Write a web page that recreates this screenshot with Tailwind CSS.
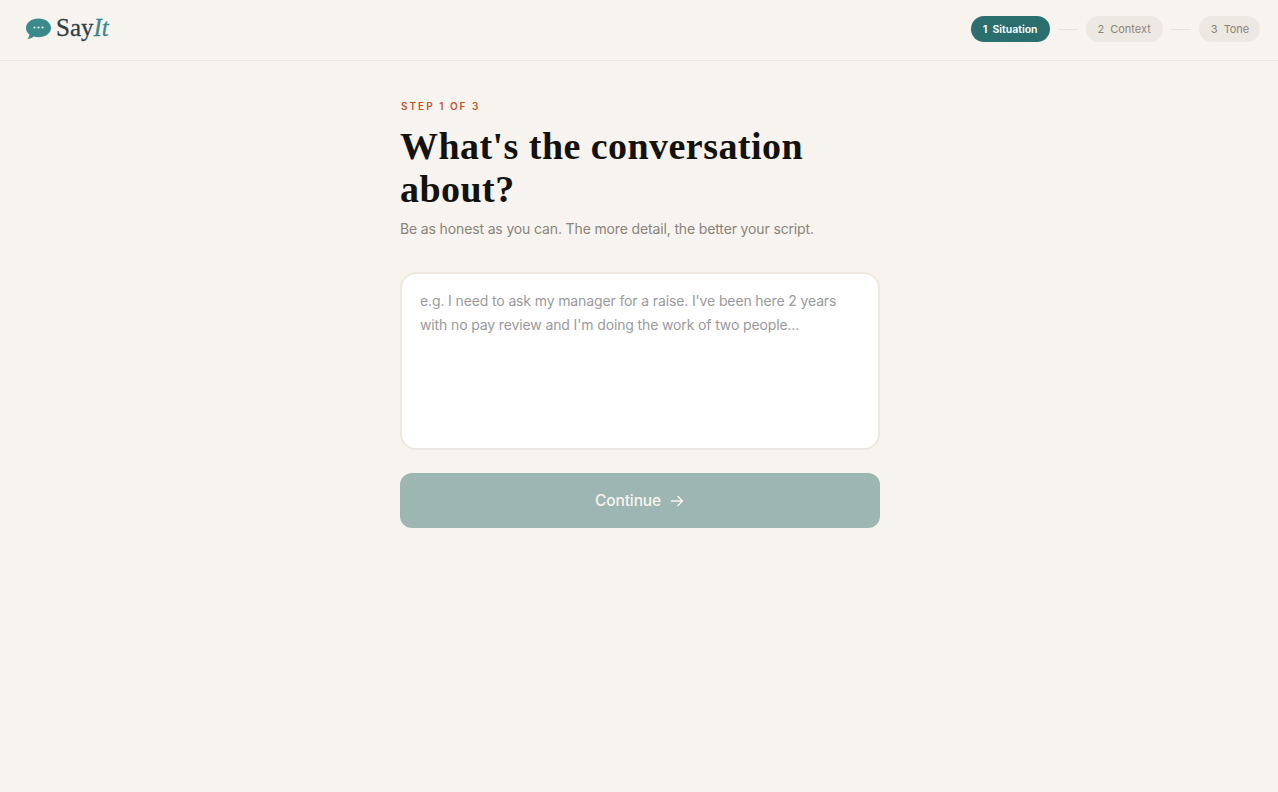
<!DOCTYPE html>
<html lang="en">

<head>
    <meta charset="UTF-8">
    <meta name="viewport" content="width=device-width, initial-scale=1.0">
    <title>SayIt</title>
    <script src="https://cdn.jsdelivr.net/npm/@tailwindcss/browser@4"></script>
</head>

<body class="min-h-screen bg-[#f7f4ef] font-['Inter',sans-serif] text-[#111111]">
    <!-- Top bar -->
    <header class="flex h-[61px] items-center justify-between border-b border-[#ece8e1] pb-[2px] pl-[25px] pr-[18px]">
        <div class="flex items-center gap-[4px]">
            <svg class="w-[27px] h-[24px]" viewBox="0 0 27 24">
                <path d="M13.5 1.5C6.6 1.5 1 5.4 1 11c0 2.7 1.3 5 3.4 6.6-.1 1.7-.8 3.2-2 4.6 2.4-.2 4.7-1.1 6.3-2.6 1.5.4 3.1.6 4.800.6 6.900 0 12.500-3.900 12.500-9.200S20.400 1.500 13.500 1.500z" fill="#3a8a8c" />
                <circle cx="9.500" cy="10.500" r="1.100" fill="#e3efee" />
                <circle cx="13.500" cy="10.500" r="1.100" fill="#e3efee" />
                <circle cx="17.500" cy="10.500" r="1.100" fill="#e3efee" />
            </svg>
            <span class="mb-[3px] font-['Liberation_Serif',serif] text-[25px] leading-none text-[#2f3f48] [-webkit-text-stroke:0.3px]">Say<em class="text-[#3a8a8c]">It</em></span>
        </div>

        <nav class="flex items-center gap-[8px] text-[11px]">
            <span class="flex h-[26px] items-center gap-[5px] rounded-full bg-[#2a6f6d] px-[12px] font-semibold text-white">1 <span class="pt-[1px] text-[10.500px]">Situation</span></span>
            <span class="h-px w-[20px] bg-[#e8e3dc]"></span>
            <span class="flex h-[26px] items-center gap-[6px] rounded-full bg-[#ede8e2] px-[12px] text-[#8c8479]">2 <span>Context</span></span>
            <span class="h-px w-[20px] bg-[#e8e3dc]"></span>
            <span class="flex h-[26px] items-center gap-[6px] rounded-full bg-[#ede8e2] pl-[12px] pr-[11px] text-[#8c8479]">3 <span class="tracking-[-0.1px]">Tone</span></span>
        </nav>
    </header>

    <!-- Step form -->
    <main class="flex justify-center pl-[2px]">
        <div class="w-[480px] pt-[38px]">
            <p class="pl-[1px] text-[10px] font-semibold leading-[14px] tracking-[2px] text-[#c4532d]">STEP 1 OF 3</p>
            <h1 class="mt-[12px] w-[420px] font-['Liberation_Serif',serif] text-[38px] font-bold leading-[43px] tracking-[0.45px] text-[#14120f]">What's the conversation about?</h1>
            <p class="mt-[8px] text-[14px] leading-[20px] tracking-[-0.14px] text-[#8a8379]">Be as honest as you can. The more detail, the better your script.</p>

            <textarea rows="5" class="mt-[33px] block h-[178px] w-full resize-none rounded-[16px] border-2 border-[#ece8e1] bg-white px-[18px] py-[15px] text-[14px] leading-[24px] tracking-[-0.13px] placeholder:text-[#9a9a9c]" placeholder="e.g. I need to ask my manager for a raise. I've been here 2 years with no pay review and I'm doing the work of two people..."></textarea>

            <button class="mt-[23px] flex h-[55px] w-full items-center justify-center gap-[8px] rounded-[12px] bg-[#9db6b2] text-[15.500px] font-medium tracking-[-0.1px] text-[#f7f4ef]">
                Continue
                <svg class="w-[16px] h-[16px]" viewBox="0 0 16 16" fill="none" stroke="currentColor" stroke-width="1.500" stroke-linecap="round" stroke-linejoin="round">
                    <path d="M2.500 8h11M9 3.500 13.500 8 9 12.500" />
                </svg>
            </button>
        </div>
    </main>
</body>

</html>
